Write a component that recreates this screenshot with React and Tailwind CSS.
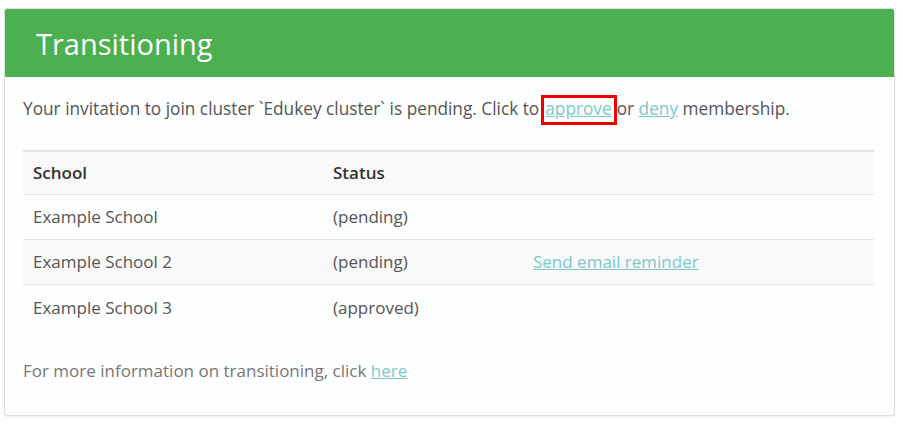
const rows = [
  { school: "Example School", status: "(pending)", action: null, striped: false, last: false },
  { school: "Example School 2", status: "(pending)", action: "Send email reminder", striped: true, last: false },
  { school: "Example School 3", status: "(approved)", action: null, striped: false, last: true },
];

export default function App() {
  return (
    <div className="bg-white min-h-[424px] pt-2 pl-1 pr-[8px] font-['Open_Sans',sans-serif] text-[#555]">
      <div className="w-[891px] h-[408px] rounded-[3px] border border-[#dedede] shadow-[0_1px_2px_rgba(0,0,0,0.08)] bg-[#fdfefe] overflow-hidden">
        {/* Header */}
        <div className="bg-[#4caf50] h-[68px] flex items-center pl-[31px]">
          <h1 className="text-white text-[29px] leading-none">Transitioning</h1>
        </div>

        <div className="px-[18px]">
          <p className="mt-[20px] text-[17.25px] leading-[24px]">
            Your invitation to join cluster `Edukey cluster` is pending. Click to
            <a href="#" className="relative text-[#7ccac7] underline ml-[6px] mr-[5px]">
              approve
              <span className="absolute -left-[4px] -right-[5px] -top-[2px] -bottom-[5px] border-[3px] border-[#ee0000]"></span>
            </a>
            or{" "}
            <a href="#" className="text-[#7ccac7] underline">deny</a> membership.
          </p>

          {/* Table */}
          <div className="mt-[29px] w-[851px] text-[17px]">
            <div className="flex h-[45px] items-center bg-[#f9f9f9] border-t-2 border-b border-[#e4e4e4] font-semibold text-[#333]">
              <div className="w-[310px] pl-[10px]">School</div>
              <div className="w-[200px]">Status</div>
              <div className="flex-1"></div>
            </div>
            {rows.map((row) => (
              <div
                key={row.school}
                className={`flex h-[45px] items-center ${row.striped ? "bg-[#f9f9f9]" : ""} ${row.last ? "" : "border-b border-[#e4e4e4]"}`}
              >
                <div className="w-[310px] pl-[10px]">{row.school}</div>
                <div className="w-[200px]">{row.status}</div>
                <div className="flex-1">
                  {row.action && (
                    <a href="#" className="text-[#7ccac7] underline">{row.action}</a>
                  )}
                </div>
              </div>
            ))}
          </div>

          <p className="mt-[28px] text-[17px] text-[#777]">
            For more information on transitioning, click{" "}
            <a href="#" className="text-[#7ccac7] underline">here</a>
          </p>
        </div>
      </div>
    </div>
  );
}
